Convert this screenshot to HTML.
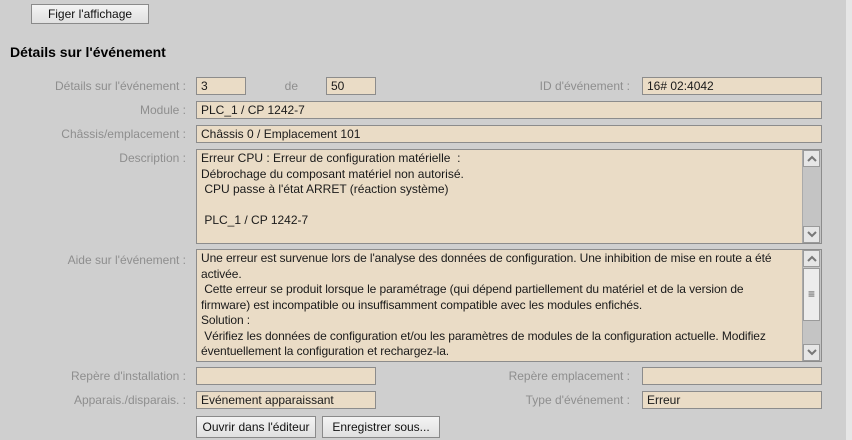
<!DOCTYPE html>
<html><head><meta charset="utf-8"><style>
body{margin:0;width:852px;height:440px;background:#cfcfcf;position:relative;overflow:hidden;font-family:"Liberation Sans",sans-serif;font-size:12px;color:#1a1a1a}
.a{position:absolute}
.strip{left:846px;top:0;width:6px;height:440px;background:#e6e6e6}
.btn{position:absolute;box-sizing:border-box;border:1px solid #8a8a8a;background:linear-gradient(#f4f4f4,#e0e0e0);text-align:center;line-height:18px;font-size:12px;color:#111}
.f{position:absolute;box-sizing:border-box;border:1px solid #8c8c8c;background:#eadcc6;height:18px;line-height:16px;padding-left:4px;white-space:nowrap}
.l{position:absolute;color:#8e8e8e;text-align:right;white-space:nowrap;line-height:18px}
.ta{position:absolute;box-sizing:border-box;border:1px solid #8c8c8c;background:#eadcc6;padding:1px 0 0 4px;line-height:15.5px;white-space:pre;overflow:hidden}
.sb{position:absolute;right:0;top:0;bottom:0;width:18px;background:#c4c4c4;border-left:1px solid #aaa}
.ar{position:absolute;left:0;width:17px;height:17px;background:#e6e6e6;border:1px solid #9a9a9a;box-sizing:border-box;color:#777;font-size:10px;text-align:center;line-height:15px}
.ar svg{position:absolute;left:3px;top:4px}
</style></head><body>
<div class="a strip"></div>
<div class="btn" style="left:31px;top:4px;width:118px;height:20px">Figer l'affichage</div>
<div class="a" style="left:10px;top:44px;font-weight:bold;font-size:14px;color:#000">Détails sur l'événement</div>

<div class="l" style="left:0;width:186px;top:77px">Détails sur l'événement :</div>
<div class="f" style="left:196px;top:77px;width:50px">3</div>
<div class="l" style="left:270px;width:28px;top:77px">de</div>
<div class="f" style="left:326px;top:77px;width:50px">50</div>
<div class="l" style="left:440px;width:190px;top:77px">ID d'événement :</div>
<div class="f" style="left:642px;top:77px;width:180px">16# 02:4042</div>

<div class="l" style="left:0;width:186px;top:101px">Module :</div>
<div class="f" style="left:196px;top:101px;width:626px">PLC_1 / CP 1242-7</div>
<div class="l" style="left:0;width:186px;top:125px">Châssis/emplacement :</div>
<div class="f" style="left:196px;top:125px;width:626px">Châssis 0 / Emplacement 101</div>

<div class="l" style="left:0;width:186px;top:149px">Description :</div>
<div class="ta" style="left:196px;top:149px;width:626px;height:95px">Erreur CPU : Erreur de configuration matérielle  :
Débrochage du composant matériel non autorisé.
 CPU passe à l'état ARRET (réaction système)

 PLC_1 / CP 1242-7<div class="sb"><div class="ar" style="top:0"><svg width="10" height="7"><path d="M1 6L5 2L9 6" stroke="#777" stroke-width="2" fill="none"/></svg></div><div class="ar" style="bottom:0"><svg width="10" height="7"><path d="M1 1L5 5L9 1" stroke="#777" stroke-width="2" fill="none"/></svg></div></div></div>

<div class="l" style="left:0;width:186px;top:251px">Aide sur l'événement :</div>
<div class="ta" style="left:196px;top:249px;width:626px;height:113px;letter-spacing:-0.1px">Une erreur est survenue lors de l'analyse des données de configuration. Une inhibition de mise en route a été
activée.
 Cette erreur se produit lorsque le paramétrage (qui dépend partiellement du matériel et de la version de
firmware) est incompatible ou insuffisamment compatible avec les modules enfichés.
Solution :
 Vérifiez les données de configuration et/ou les paramètres de modules de la configuration actuelle. Modifiez
éventuellement la configuration et rechargez-la.<div class="sb"><div class="ar" style="top:0"><svg width="10" height="7"><path d="M1 6L5 2L9 6" stroke="#777" stroke-width="2" fill="none"/></svg></div><div class="ar" style="top:18px;height:53px;line-height:51px;background:#ececec;color:#555;font-size:12px">≡</div><div class="ar" style="bottom:0"><svg width="10" height="7"><path d="M1 1L5 5L9 1" stroke="#777" stroke-width="2" fill="none"/></svg></div></div></div>

<div class="l" style="left:0;width:186px;top:367px">Repère d'installation :</div>
<div class="f" style="left:196px;top:367px;width:180px"></div>
<div class="l" style="left:440px;width:190px;top:367px">Repère emplacement :</div>
<div class="f" style="left:642px;top:367px;width:180px"></div>

<div class="l" style="left:0;width:186px;top:391px">Apparais./disparais. :</div>
<div class="f" style="left:196px;top:391px;width:180px">Evénement apparaissant</div>
<div class="l" style="left:440px;width:190px;top:391px">Type d'événement :</div>
<div class="f" style="left:642px;top:391px;width:180px">Erreur</div>

<div class="btn" style="left:196px;top:416px;width:120px;height:22px;line-height:20px">Ouvrir dans l'éditeur</div>
<div class="btn" style="left:322px;top:416px;width:118px;height:22px;line-height:20px">Enregistrer sous...</div>
</body></html>
